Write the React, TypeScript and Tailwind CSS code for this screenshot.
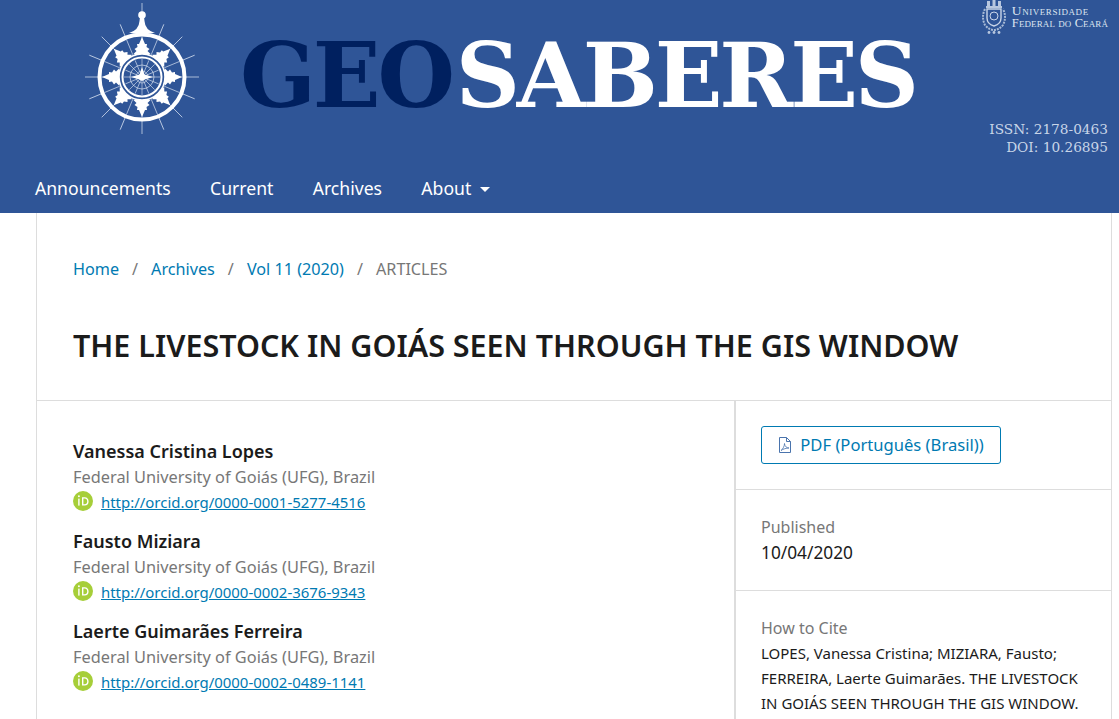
const authors = [
  { name: 'Vanessa Cristina Lopes', orcid: 'http://orcid.org/0000-0001-5277-4516' },
  { name: 'Fausto Miziara', orcid: 'http://orcid.org/0000-0002-3676-9343' },
  { name: 'Laerte Guimarães Ferreira', orcid: 'http://orcid.org/0000-0002-0489-1141' },
]

const rayAngles = Array.from({ length: 16 }, (_, i) => i * 22.5)
const pointAngles = [0, 45, 90, 135, 180, 225, 270, 315]

function CompassLogo() {
  return (
    <svg width="116" height="136" viewBox="0 0 116 136" className="shrink-0">
      <g transform="translate(59 77)">
        {rayAngles.map((a) => (
          <line key={a} x1="0" y1="-30" x2="0" y2={a === 0 ? -74 : -57} stroke="#c9d5e8" strokeWidth="0.8" transform={`rotate(${a})`} />
        ))}
        <path d="M-13 -44 Q-3 -47 -2.5 -56 L-2 -60 L2 -60 L2.5 -56 Q3 -47 13 -44 Z" fill="#fff" />
        <circle cy="-62" r="3.8" fill="#fff" />
        <circle r="42.5" fill="#2f5597" stroke="#fff" strokeWidth="4" />
        {rayAngles.map((a) => (
          <line key={a} x1="0" y1="-24" x2="0" y2="-41" stroke="#c9d5e8" strokeWidth="0.7" transform={`rotate(${a})`} />
        ))}
        {pointAngles.map((a) => (
          <path
            key={a}
            d="M0 -40 L3 -33 L5 -33 L4.5 -30 L7.5 -28 L5.5 -26 L8.5 -23 L4 -21 L-4 -21 L-8.5 -23 L-5.5 -26 L-7.5 -28 L-4.5 -30 L-5 -33 L-3 -33 Z"
            fill="#fff"
            transform={`rotate(${a})`}
          />
        ))}
        <circle r="23" fill="#2f5597" stroke="#fff" strokeWidth="1.6" />
        <circle r="19.5" fill="none" stroke="#fff" strokeWidth="2" />
        <circle r="12" fill="none" stroke="#dbe4f1" strokeWidth="0.7" />
        <circle r="6" fill="none" stroke="#dbe4f1" strokeWidth="0.6" />
        {rayAngles.map((a) => (
          <line key={a} x1="0" y1="0" x2="0" y2="-18" stroke="#dbe4f1" strokeWidth="0.6" transform={`rotate(${a})`} />
        ))}
        <path d="M0 -10 L2.5 -2.5 L11 0 L2.5 2.5 L0 4 L-2.5 2.5 L-11 0 L-2.5 -2.5 Z" fill="#fff" />
      </g>
    </svg>
  )
}

function UfcCrest() {
  return (
    <svg width="26" height="34" viewBox="0 0 26 34" className="shrink-0">
      <g fill="#b8c7df">
        <rect x="6" y="1" width="3" height="6" />
        <rect x="11.5" y="0" width="3" height="7" />
        <rect x="17" y="1" width="3" height="6" />
        <rect x="5" y="6" width="16" height="2" />
      </g>
      <path d="M6 9 H20 V18 Q20 24 13 26 Q6 24 6 18 Z" fill="none" stroke="#c9d5e8" strokeWidth="1.4" />
      <circle cx="13" cy="16" r="4" fill="none" stroke="#c9d5e8" strokeWidth="1" />
      <path d="M4 9 Q0 17 4 25 Q8 30 13 30 Q18 30 22 25 Q26 17 22 9" fill="none" stroke="#a9bbd6" strokeWidth="2" strokeDasharray="2 1" />
      <g fill="#b8c7df">
        <circle cx="8" cy="32.5" r="1.4" />
        <circle cx="13" cy="32.5" r="1.4" />
        <circle cx="18" cy="32.5" r="1.4" />
      </g>
    </svg>
  )
}

function OrcidIcon() {
  return (
    <svg width="20" height="20" viewBox="0 0 20 20" className="-mt-[3px] shrink-0">
      <circle cx="10" cy="10" r="10" fill="#a6ce39" />
      <rect x="5.2" y="7.6" width="1.4" height="7" fill="#fff" />
      <circle cx="5.9" cy="5.3" r="0.95" fill="#fff" />
      <path d="M9 6.3 V14.6 H11.7 C14.2 14.6 15.6 12.9 15.6 10.5 C15.6 8 14.2 6.3 11.7 6.3 Z M10.4 7.6 H11.6 C13.3 7.6 14.2 8.8 14.2 10.5 C14.2 12.1 13.3 13.3 11.6 13.3 H10.4 Z" fill="#fff" fillRule="evenodd" />
    </svg>
  )
}

function PdfIcon() {
  return (
    <svg width="14" height="16" viewBox="0 0 14 16" fill="none" stroke="#4a74ad" strokeWidth="1" className="shrink-0">
      <path d="M1.5 0.5 H8.5 L12.5 4.5 V15.5 H1.5 Z" />
      <path d="M8.5 0.5 V4.5 H12.5" />
      <path d="M3 13.5 C5 12 6.5 9 6.5 6.5 C6.5 9 8.5 11 11 11 C8.5 11 5 12 3 13.5 Z" strokeWidth="0.8" />
    </svg>
  )
}

export default function App() {
  return (
    <div className="h-[719px] overflow-hidden bg-white font-['Noto_Sans',sans-serif] text-[#1b1b1b]">
      <header className="h-[213px] bg-[#2f5597]">
        <div className="flex h-[170px] justify-between pl-[83px] pr-[11px]">
          <div className="flex items-start">
            <CompassLogo />
            <div className="ml-[41px] mt-[20px] text-[89px] font-bold leading-[112px] tracking-[-3.2px] [font-family:'DejaVu_Serif',serif]">
              <span className="text-[#00205f]">GEO</span>
              <span className="ml-[4px] text-white">SABERES</span>
            </div>
          </div>
          <div className="flex flex-col items-end">
            <div className="flex items-center gap-[5px]">
              <UfcCrest />
              <div className="font-['Liberation_Serif',serif] leading-[12px] text-[#dde5f0] [font-variant:small-caps]">
                <div className="text-[13.5px] tracking-[0.55px]">Universidade</div>
                <div className="text-[12.5px] tracking-[0.1px]">Federal do Ceará</div>
              </div>
            </div>
            <div className="mt-[86px] text-right text-[13.7px] leading-[18px] text-[#c9d5e8] [font-family:'DejaVu_Serif',serif]">
              <div>ISSN: 2178-0463</div>
              <div>DOI: 10.26895</div>
            </div>
          </div>
        </div>
        <nav className="flex items-center gap-[39.3px] pl-[35px] pt-[4px] text-[17.6px] leading-[28px] text-white">
          <a>Announcements</a>
          <a>Current</a>
          <a>Archives</a>
          <a className="flex items-center">
            About
            <span className="ml-[9px] mt-[2px] border-x-[5px] border-t-[5px] border-x-transparent border-t-white" />
          </a>
        </nav>
      </header>

      <main className="ml-[36px] mr-[7px] border-x border-[#dddddd]">
        <div className="h-[188px] border-b border-[#dddddd] px-[36px] pt-[44px]">
          <div className="flex items-center text-[16.2px] leading-[24px]">
            <a className="text-[#007ab2]">Home</a>
            <span className="px-[13px] text-[#777777]">/</span>
            <a className="text-[#007ab2]">Archives</a>
            <span className="px-[13px] text-[#777777]">/</span>
            <a className="text-[#007ab2]">Vol 11 (2020)</a>
            <span className="px-[13px] text-[#777777]">/</span>
            <span className="text-[#777777]">ARTICLES</span>
          </div>
          <h1 className="mt-[44px] text-[30.47px] font-semibold leading-[40px]">THE LIVESTOCK IN GOIÁS SEEN THROUGH THE GIS WINDOW</h1>
        </div>

        <div className="flex h-[340px]">
          <div className="w-[699px] border-r-2 border-[#dddddd] px-[36px] pt-[37px]">
            {authors.map((a) => (
              <div key={a.name} className="mb-[13px]">
                <div className="text-[18px] font-semibold leading-[26px]">{a.name}</div>
                <div className="text-[16.35px] leading-[26px] text-[#777777]">Federal University of Goiás (UFG), Brazil</div>
                <div className="flex h-[25px] items-center gap-[8px]">
                  <OrcidIcon />
                  <a className="text-[14.95px] text-[#007ab2] underline">{a.orcid}</a>
                </div>
              </div>
            ))}
          </div>

          <aside className="flex-1">
            <div className="h-[89px] border-b border-[#dddddd] px-[25px] pt-[25px]">
              <a className="inline-flex h-[38px] w-[240px] items-center justify-center gap-[8px] rounded-[3px] border border-[#007ab2] text-[16.6px] text-[#007ab2]">
                <PdfIcon />
                PDF (Português (Brasil))
              </a>
            </div>
            <div className="h-[101px] border-b border-[#dddddd] px-[25px] pt-[25px]">
              <div className="text-[16px] leading-[25px] text-[#777777]">Published</div>
              <div className="text-[17.3px] leading-[26px]">10/04/2020</div>
            </div>
            <div className="px-[25px] pt-[25px]">
              <div className="text-[16px] leading-[25px] text-[#777777]">How to Cite</div>
              <p className="text-[15px] leading-[25px]">
                LOPES, Vanessa Cristina; MIZIARA, Fausto; FERREIRA, Laerte Guimarães. THE LIVESTOCK IN GOIÁS SEEN THROUGH THE GIS WINDOW.
              </p>
            </div>
          </aside>
        </div>
      </main>
    </div>
  )
}
